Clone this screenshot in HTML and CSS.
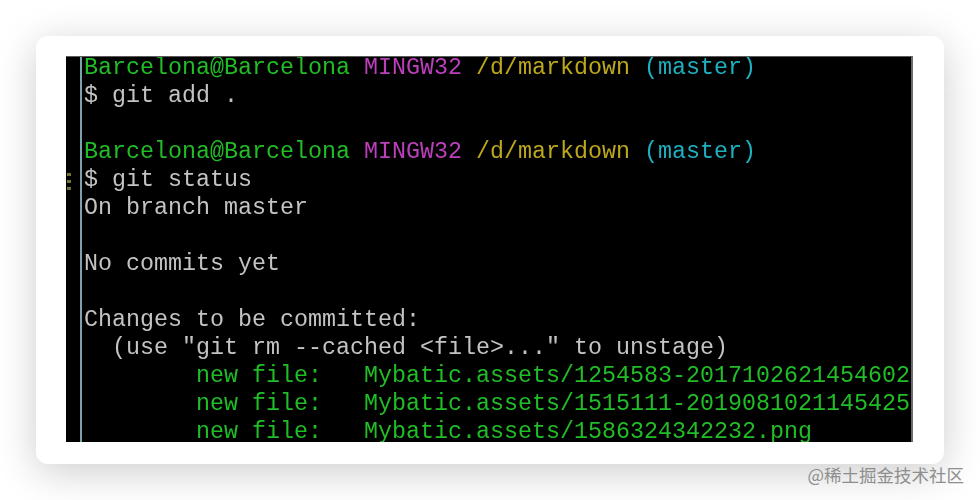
FILE: index.html
```html
<!DOCTYPE html>
<html lang="zh">
<head>
<meta charset="utf-8">
<title>git status</title>
<link rel="stylesheet" href="styles.css">
</head>
<body>
<div class="card">
  <div class="terminal">
    <div class="mark"><span></span><span></span><span></span></div>
    <div class="rule"></div>
    <pre class="output"><span class="g">Barcelona@Barcelona</span> <span class="m">MINGW32</span> <span class="y">/d/markdown</span> <span class="c">(master)</span>
$ git add .

<span class="g">Barcelona@Barcelona</span> <span class="m">MINGW32</span> <span class="y">/d/markdown</span> <span class="c">(master)</span>
$ git status
On branch master

No commits yet

Changes to be committed:
  (use "git rm --cached &lt;file&gt;..." to unstage)
<span class="g">        new file:   Mybatic.assets/1254583-20171026214546025.png</span>
<span class="g">        new file:   Mybatic.assets/1515111-20190810211454255.png</span>
<span class="g">        new file:   Mybatic.assets/1586324342232.png</span></pre>
  </div>
</div>
<div class="watermark">@稀土掘金技术社区</div>
</body>
</html>
```

FILE: styles.css
```css
html, body {
  margin: 0;
  padding: 0;
}
body {
  width: 980px;
  height: 500px;
  overflow: hidden;
  background: #ffffff;
  padding: 36px 0 0 36px;
  box-sizing: border-box;
}
.card {
  width: 908px;
  height: 428px;
  box-sizing: border-box;
  background: #ffffff;
  border-radius: 12px;
  box-shadow: 0 8px 40px rgba(0, 0, 0, 0.2);
  padding: 20px 31px 22px 30px;
  display: flex;
}
.terminal {
  flex: 1;
  min-width: 0;
  background: #000;
  border-top: 1px solid #5a5a5a;
  border-right: 2px solid #6b6b6b;
  overflow: hidden;
  display: flex;
  align-items: stretch;
}
.mark {
  flex: 0 0 6px;
  margin-left: 1px;
  padding-top: 116px;
  display: flex;
  flex-direction: column;
  gap: 4px;
}
.mark span {
  display: block;
  width: 4px;
  height: 3px;
  background: #8f8d3c;
  opacity: 0.8;
}
.rule {
  flex: 0 0 2px;
  margin-left: 7px;
  background: #7aa4ab;
}
.output {
  flex: 0 0 auto;
  margin: -3px 0 0 2px;
  font-family: "Liberation Mono", "DejaVu Sans Mono", monospace;
  font-size: 23.33px;
  line-height: 28px;
  color: #c3c3c3;
  white-space: pre;
  filter: blur(0.35px);
}
.g { color: #21bd27; }
.m { color: #bc3fbc; }
.y { color: #bda81b; }
.c { color: #1eb0c0; }
.watermark {
  width: 928px;
  text-align: right;
  font-family: "Noto Sans CJK SC", sans-serif;
  font-size: 17.5px;
  line-height: 22px;
  color: #8e8e8e;
}
```
